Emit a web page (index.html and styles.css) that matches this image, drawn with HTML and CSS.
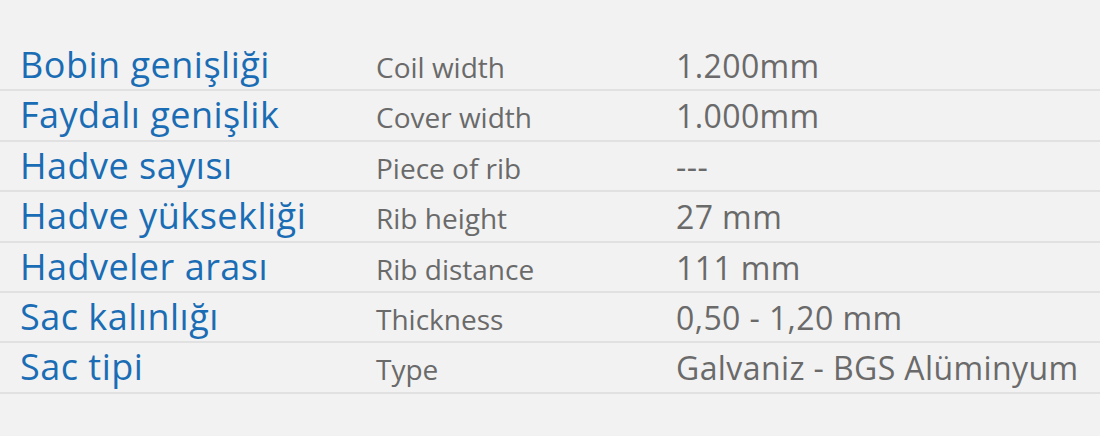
FILE: index.html
```html
<!DOCTYPE html>
<html lang="tr">
<head>
<meta charset="utf-8">
<link rel="stylesheet" href="styles.css">
</head>
<body>
<div class="specs">
  <div class="row"><span class="tr">Bobin genişliği</span><span class="en">Coil width</span><span class="val">1.200mm</span></div>
  <div class="row"><span class="tr">Faydalı genişlik</span><span class="en">Cover width</span><span class="val">1.000mm</span></div>
  <div class="row"><span class="tr">Hadve sayısı</span><span class="en">Piece of rib</span><span class="val">---</span></div>
  <div class="row"><span class="tr">Hadve yüksekliği</span><span class="en">Rib height</span><span class="val">27 mm</span></div>
  <div class="row"><span class="tr">Hadveler arası</span><span class="en">Rib distance</span><span class="val">111 mm</span></div>
  <div class="row"><span class="tr">Sac kalınlığı</span><span class="en">Thickness</span><span class="val">0,50 - 1,20 mm</span></div>
  <div class="row"><span class="tr">Sac tipi</span><span class="en">Type</span><span class="val">Galvaniz - BGS Alüminyum</span></div>
</div>
</body>
</html>
```

FILE: styles.css
```css
html, body {
  margin: 0;
  padding: 0;
  background: #f2f2f2;
}
body {
  width: 1100px;
  height: 436px;
  overflow: hidden;
  font-family: "Open Sans", "Noto Sans", sans-serif;
}
.specs {
  padding-top: 41px;
}
.row {
  display: grid;
  grid-template-columns: 356px 300px 1fr;
  align-items: baseline;
  box-sizing: border-box;
  height: 50.4px;
  padding: 6px 0 0 20px;
  border-bottom: 2px solid #e1e1e1;
  line-height: 1;
  white-space: nowrap;
}
.tr {
  color: #1a6db4;
  font-size: 36px;
  letter-spacing: 0.5px;
}
.en {
  color: #6a6a6a;
  font-size: 28px;
}
.val {
  color: #6a6a6a;
  font-size: 32px;
  letter-spacing: 0.4px;
}
```
